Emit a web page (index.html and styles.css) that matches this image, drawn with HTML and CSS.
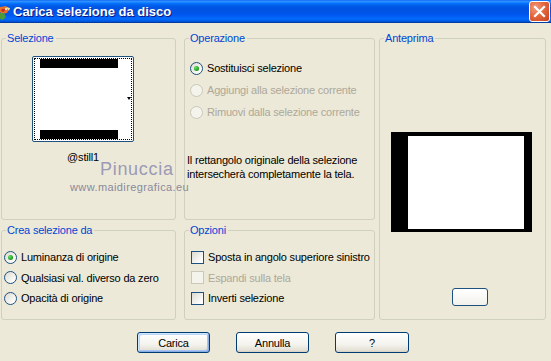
FILE: index.html
```html
<!DOCTYPE html>
<html lang="it">
<head>
<meta charset="UTF-8">
<title>Carica selezione da disco</title>
<link rel="stylesheet" href="styles.css">
</head>
<body>

<div class="window">
  <div class="titlebar">
    <svg class="app-icon" width="11" height="16" viewBox="0 0 11 16">
      <path d="M0 3 L6 2 L9 5 L7 9 L2 10 L0 8 Z" fill="#E8702A"/>
      <path d="M0 9 L4 9 L6 13 L3 16 L0 15 Z" fill="#4C9A3A"/>
      <path d="M6 3 L10 4 L9 7 Z" fill="#F6E27A"/>
      <path d="M2 5 L5 5 L4 8 L1 7 Z" fill="#C8281E"/>
      <circle cx="6" cy="5" r="1" fill="#fff"/>
    </svg>
    <span class="title">Carica selezione da disco</span>
    <span class="close">
      <svg width="21" height="21" viewBox="0 0 21 21">
        <path d="M6 6 L15 15 M15 6 L6 15" stroke="#fff" stroke-width="2.2" stroke-linecap="square"/>
      </svg>
    </span>
  </div>

  <div class="client">
    <div class="groups">

      <section class="group g-sel">
        <span class="group-title">Selezione</span>
        <div class="thumb">
          <div class="thumb-focus">
            <div class="bar"></div>
            <div class="bar"></div>
            <span class="thumb-arrow"></span>
          </div>
        </div>
        <div class="thumb-name">@still1</div>
      </section>

      <section class="group g-op">
        <span class="group-title">Operazione</span>
        <div class="rows">
          <div class="row"><span class="radio on"></span>Sostituisci selezione</div>
          <div class="row disabled"><span class="radio"></span>Aggiungi alla selezione corrente</div>
          <div class="row disabled"><span class="radio"></span>Rimuovi dalla selezione corrente</div>
        </div>
        <p class="info">Il rettangolo originale della selezione intersecherà completamente la tela.</p>
      </section>

      <section class="group g-prev">
        <span class="group-title">Anteprima</span>
        <div class="preview"><div class="preview-sel"></div></div>
        <span class="small-btn"></span>
      </section>

      <section class="group g-crea">
        <span class="group-title">Crea selezione da</span>
        <div class="row short"><span class="radio on"></span>Luminanza di origine</div>
        <div class="row short"><span class="radio"></span>Qualsiasi val. diverso da zero</div>
        <div class="row short"><span class="radio"></span>Opacità di origine</div>
      </section>

      <section class="group g-opt">
        <span class="group-title">Opzioni</span>
        <div class="row short"><span class="check"></span>Sposta in angolo superiore sinistro</div>
        <div class="row short disabled"><span class="check"></span>Espandi sulla tela</div>
        <div class="row short"><span class="check"></span>Inverti selezione</div>
      </section>

    </div>

    <div class="actions">
      <span class="btn default">Carica</span>
      <span class="btn">Annulla</span>
      <span class="btn wide">?</span>
    </div>

    <div class="watermark">
      <span class="wm-name">Pinuccia</span>
      <span class="wm-site">www.maidiregrafica.eu</span>
    </div>
  </div>
</div>

</body>
</html>
```

FILE: styles.css
```css
body {
  margin: 0;
  width: 551px;
  height: 361px;
  overflow: hidden;
  background-color: #ECE9D8;
  font-family: "Liberation Sans", Arial, sans-serif;
  font-size: 11px;
  letter-spacing: -0.2px;
  color: #000;
}

/* title bar */
.titlebar {
  height: 23px;
  display: flex;
  align-items: center;
  background: linear-gradient(to bottom, #0058EE 0%, #3593FF 4%, #288EFF 8%, #127DFF 12%, #036FFC 16%, #0262EE 22%, #0057E5 30%, #0054E3 40%, #0055EB 60%, #005BF5 70%, #026AFE 80%, #0062EF 88%, #0052D6 94%, #0040AB 97%, #003092 100%);
}
.app-icon {
  margin-left: 0;
  margin-top: 1px;
}
.title {
  margin-left: 2px;
  color: #fff;
  font-size: 13px;
  font-weight: bold;
  letter-spacing: 0;
  text-shadow: 1px 1px 0 #0A1883;
}
.close {
  margin-left: auto;
  margin-right: 1px;
  width: 21px;
  height: 21px;
  box-sizing: border-box;
  border: 1px solid #fff;
  border-radius: 3px;
  background: radial-gradient(circle at 30% 30%, #F19B7E 0%, #E4683F 45%, #C8411C 100%);
  display: flex;
}
.close svg {
  margin: -1px;
}

/* client area */
.client {
  position: relative;
  padding: 15px 0 0 1px;
}
.groups {
  display: grid;
  grid-template-columns: 175px 8px 191px 4px 167px;
  grid-template-rows: 182px 90px;
  row-gap: 10px;
}
.group {
  position: relative;
  border: 1px solid #D0D0BF;
  border-radius: 3px;
  box-sizing: border-box;
}
.group-title {
  position: absolute;
  top: -7px;
  left: 4px;
  padding: 0 2px 0 1px;
  line-height: 13px;
  background-color: #ECE9D8;
  color: #0046D5;
}
.g-sel { grid-column: 1; grid-row: 1; padding: 17px 0 0 30px; }
.g-op { grid-column: 3; grid-row: 1; padding: 18px 0 0 2px; }
.g-prev { grid-column: 5; grid-row: 1 / span 2; }
.g-crea { grid-column: 1; grid-row: 2; padding: 16px 0 0 2px; }
.g-opt { grid-column: 3; grid-row: 2; padding: 16px 0 0 6px; }

/* selection thumbnail */
.thumb {
  width: 102px;
  height: 86px;
  box-sizing: border-box;
  border: 1px solid #1C5180;
  border-radius: 2px;
  background-color: #fff;
  padding: 1px;
}
.thumb-focus {
  position: relative;
  height: 100%;
  box-sizing: border-box;
  border: 1px dotted #000;
  display: flex;
  flex-direction: column;
  justify-content: space-between;
}
.bar {
  height: 9px;
  width: 78px;
  margin-left: 5px;
  background-color: #000;
}
.thumb-arrow {
  position: absolute;
  right: 0;
  top: 38px;
  border-left: 2.5px solid transparent;
  border-right: 2.5px solid transparent;
  border-top: 3px solid #000;
}
.thumb-name {
  width: 102px;
  margin-top: 9px;
  line-height: 13px;
  text-align: center;
}

/* rows with radios / checks */
.rows {
  margin-left: 3px;
}
.row {
  display: flex;
  align-items: center;
  height: 22px;
}
.row.short {
  height: 20.5px;
}
.row.disabled {
  color: #ACA899;
}
.radio, .check {
  flex: none;
  width: 13px;
  height: 13px;
  box-sizing: border-box;
  margin-right: 4px;
  border: 1px solid #1C5180;
  background: linear-gradient(135deg, #DCD9CF 0%, #fff 85%);
}
.radio {
  position: relative;
  border-radius: 50%;
}
.radio.on::after {
  content: "";
  position: absolute;
  left: 3px;
  top: 3px;
  width: 5px;
  height: 5px;
  border-radius: 50%;
  background: radial-gradient(circle at 35% 35%, #6CE06A 0%, #21A121 60%, #188018 100%);
}
.disabled .radio, .disabled .check {
  border-color: #CAC8BB;
  background: #F4F3EC;
}
.info {
  margin: 31px 0 0;
  line-height: 13.5px;
  width: 180px;
}

/* preview */
.preview {
  width: 141px;
  height: 100px;
  box-sizing: border-box;
  margin: 93px 0 0 11px;
  border-style: solid;
  border-color: #000;
  border-width: 4px 8px 3px 17px;
  background-color: #000;
}
.preview-sel {
  height: 100%;
  background-color: #fff;
}
.small-btn {
  display: block;
  width: 36px;
  height: 18px;
  box-sizing: border-box;
  margin: 56px 0 0 72px;
  border: 1px solid #1C5180;
  border-radius: 3px;
  background: linear-gradient(#fff, #F2F1EC);
}

/* dialog buttons */
.actions {
  display: flex;
  gap: 26px;
  margin-top: 12px;
  padding-left: 136px;
}
.btn {
  width: 73px;
  height: 21px;
  box-sizing: border-box;
  border: 1px solid #003C74;
  border-radius: 3px;
  background: linear-gradient(#FFFFFF 0%, #F4F3EE 60%, #E4E1D5 90%, #D6D0C5 100%);
  display: flex;
  align-items: center;
  justify-content: center;
}
.btn.wide {
  width: 74px;
}
.btn.default {
  box-shadow: inset 1px 1px 0 #CEE7FF, inset -1px -1px 0 #89ADE4, inset 2px 2px 0 #BCD4F6, inset -2px -2px 0 #A9C3F0;
}

/* watermark over the dialog */
.watermark {
  position: absolute;
  left: 0;
  top: 0;
}
.wm-name {
  position: absolute;
  left: 100px;
  top: 137px;
  font-size: 18px;
  line-height: 18px;
  letter-spacing: 0.7px;
  color: #9C9AB6;
}
.wm-site {
  position: absolute;
  left: 70px;
  top: 158px;
  font-size: 11px;
  line-height: 13px;
  letter-spacing: 0.4px;
  color: #8A8A9C;
  white-space: nowrap;
}
```
